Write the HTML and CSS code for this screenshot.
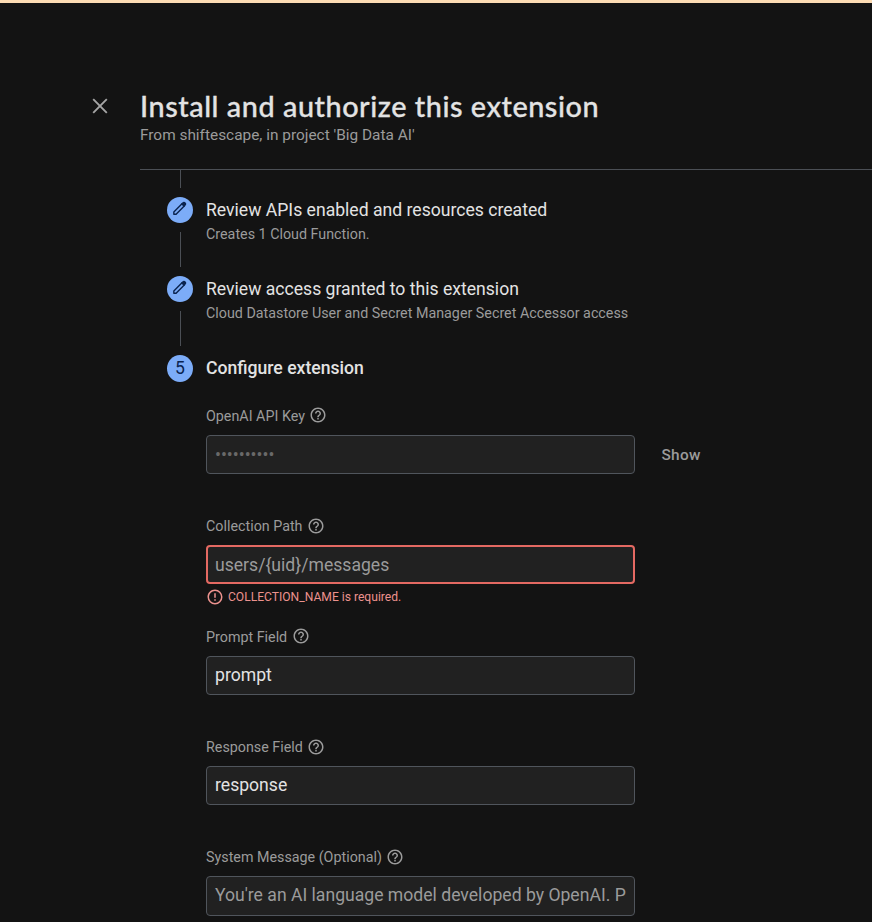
FILE: index.html
```html
<!DOCTYPE html>
<html lang="en">
<head>
<meta charset="utf-8">
<title>Install extension</title>
<link rel="stylesheet" href="styles.css">
</head>
<body>
<svg width="0" height="0" class="defs">
  <symbol id="help" viewBox="0 0 24 24"><path d="M11 18h2v-2h-2v2zm1-16C6.480 2 2 6.480 2 12s4.480 10 10 10 10-4.480 10-10S17.520 2 12 2zm0 18c-4.410 0-8-3.590-8-8s3.590-8 8-8 8 3.590 8 8-3.590 8-8 8zm0-14c-2.210 0-4 1.790-4 4h2c0-1.100.9-2 2-2s2 .9 2 2c0 2-3 1.750-3 5h2c0-2.250 3-2.500 3-5 0-2.210-1.790-4-4-4z"/></symbol>
  <symbol id="error" viewBox="0 0 24 24"><path d="M11 15h2v2h-2zm0-8h2v6h-2zm1-5C6.470 2 2 6.500 2 12a10 10 0 1 0 10-10zm0 18a8 8 0 1 1 0-16 8 8 0 0 1 0 16z"/></symbol>
  <symbol id="pencil" viewBox="0 0 18 18"><path d="M3 12.600 11.900 3.700 14.300 6.100 5.400 15H3Z" fill="none" stroke="currentColor" stroke-width="1.500" stroke-linejoin="round"/><path d="M10.600 4.300 12.700 2.200Q13.700 1.400 14.700 2.200L15.800 3.300Q16.600 4.300 15.800 5.300L13.700 7.400Z"/></symbol>
</svg>
<main class="page">
  <header class="header">
    <svg class="close" viewBox="0 0 16 16"><path d="M1.200 1.200 14.800 14.800M14.800 1.200 1.200 14.800"/></svg>
    <div class="heading">
      <h1 class="title">Install and authorize this extension</h1>
      <p class="subtitle">From shiftescape, in project 'Big Data AI'</p>
    </div>
  </header>
  <section class="steps">
    <div class="lead"></div>
    <div class="step">
      <div class="rail"><span class="badge"><svg><use href="#pencil"/></svg></span><i class="line"></i></div>
      <div><h2 class="step-title">Review APIs enabled and resources created</h2><p class="step-note">Creates 1 Cloud Function.</p></div>
    </div>
    <div class="step">
      <div class="rail"><span class="badge"><svg><use href="#pencil"/></svg></span><i class="line"></i></div>
      <div><h2 class="step-title">Review access granted to this extension</h2><p class="step-note">Cloud Datastore User and Secret Manager Secret Accessor access</p></div>
    </div>
    <div class="step">
      <div class="rail"><span class="badge number">5</span></div>
      <div><h2 class="step-title active">Configure extension</h2></div>
    </div>
    <form class="form">
      <div class="field">
        <label class="label">OpenAI API Key <svg><use href="#help"/></svg></label>
        <div class="row"><div class="input dots">••••••••••</div><span class="show">Show</span></div>
      </div>
      <div class="field">
        <label class="label">Collection Path <svg><use href="#help"/></svg></label>
        <div class="input invalid">users/{uid}/messages</div>
        <div class="error"><svg><use href="#error"/></svg>COLLECTION_NAME is required.</div>
      </div>
      <div class="field">
        <label class="label">Prompt Field <svg><use href="#help"/></svg></label>
        <div class="input filled">prompt</div>
      </div>
      <div class="field">
        <label class="label">Response Field <svg><use href="#help"/></svg></label>
        <div class="input filled">response</div>
      </div>
      <div class="field">
        <label class="label">System Message (Optional) <svg><use href="#help"/></svg></label>
        <div class="input">You're an AI language model developed by OpenAI. P</div>
      </div>
    </form>
  </section>
</main>
</body>
</html>
```
FILE: styles.css
```css
* { box-sizing: border-box; }
body { margin: 0; background: #131313; color: #e3e3e3; font-family: Roboto, "Liberation Sans", sans-serif; }
h1, h2, p { margin: 0; font-weight: 400; }
.defs { position: absolute; }
.page { height: 922px; overflow: hidden; border-top: 3px solid #fddcb4; }
.header { display: flex; height: 166px; padding: 84px 0 0 92.400px; }
.close { flex: none; width: 16px; height: 16px; margin: 11px 31.600px 0 0; fill: none; stroke: #a5a5a5; stroke-width: 1.900; }
.heading { flex: 1; }
.title { font-family: Lato, Roboto, sans-serif; font-size: 28.800px; line-height: 38px; font-weight: 500; letter-spacing: 0.550px; -webkit-text-stroke: 0.300px currentColor; white-space: nowrap; }
.subtitle { font-size: 15.400px; line-height: 20px; color: #9b9b9b; }
.steps { margin-left: 140px; border-top: 1px solid #4b4f55; padding-left: 27px; }
.lead { width: 1px; height: 18px; margin-left: 13px; background: #4b4f55; }
.step { display: flex; gap: 13px; height: 79px; padding-top: 9px; }
.rail { flex: none; width: 26px; }
.badge { display: flex; align-items: center; justify-content: center; width: 26px; height: 26px; border-radius: 50%; background: #7cacf8; color: #0b2450; font-size: 17.600px; }
.number { height: 27px; padding-bottom: 1px; }
.badge svg { width: 17px; height: 17px; margin: 0 1px 3px 0; fill: currentColor; }
.line { display: block; width: 1px; height: 35px; margin: 9px 0 0 13px; background: #4b4f55; }
.step-title { font-size: 17.600px; line-height: 26px; }
.active { font-weight: 500; }
.step-note { font-size: 14.300px; line-height: 22px; color: #9b9b9b; }
.form { margin: -19.400px 0 0 39px; }
.field { height: 110.470px; }
.label { display: flex; align-items: center; gap: 4.500px; height: 20px; margin-bottom: 9px; color: #9b9b9b; font-size: 14.300px; }
.label svg, .error svg { flex: none; width: 18px; height: 18px; margin-bottom: 1px; fill: currentColor; }
.row { display: flex; align-items: center; gap: 26.400px; }
.input { width: 429px; height: 39.400px; padding: 0 8px; border: 1px solid #50555c; border-radius: 4px; background: #212121; color: #9b9b9b; font-size: 17.600px; line-height: 37.600px; white-space: nowrap; overflow: hidden; }
.filled { color: #e3e3e3; }
.dots { color: #696969; line-height: 38px; }
.invalid { border: 2px solid #e46962; padding: 0 7px; line-height: 36px; }
.show { padding-top: 2px; color: #9b9b9b; font-size: 15.400px; font-weight: 500; letter-spacing: 0.350px; }
.error { display: flex; align-items: center; gap: 4px; height: 26px; color: #ec928e; font-size: 12.100px; }
```
